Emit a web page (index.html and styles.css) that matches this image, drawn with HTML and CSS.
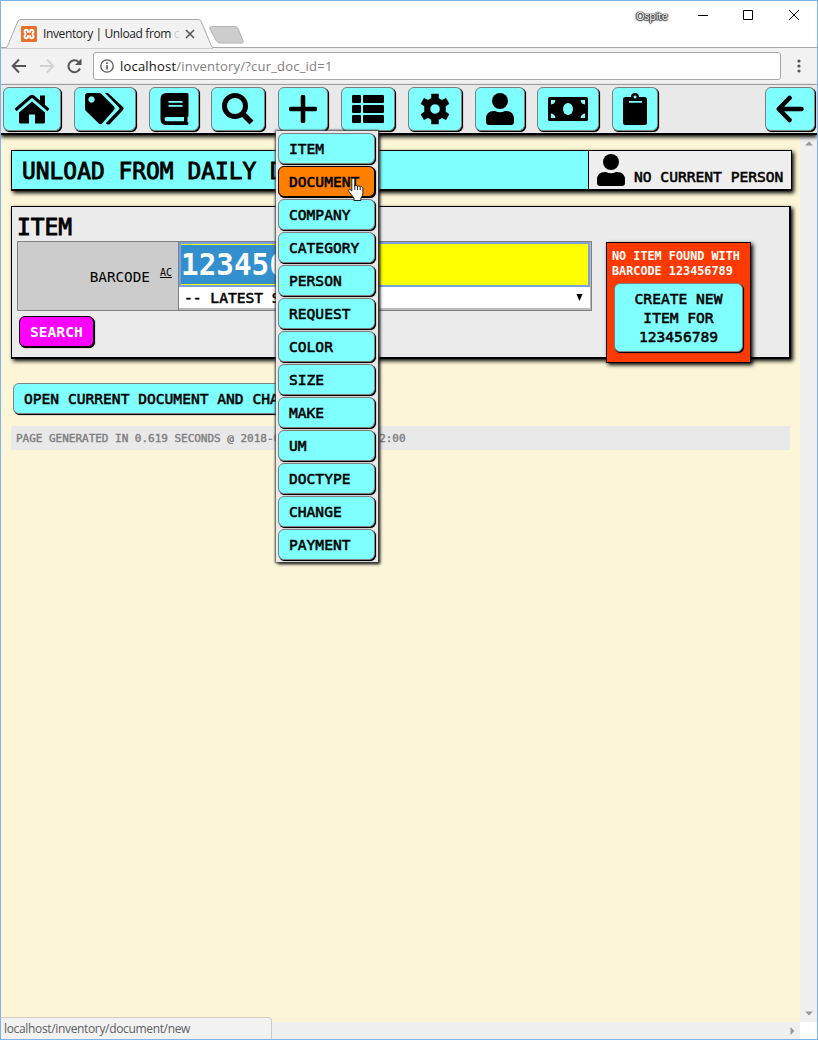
FILE: index.html
```
<!DOCTYPE html>
<html lang="en">
<head>
<meta charset="utf-8">
<title>Inventory</title>
<link rel="stylesheet" href="styles.css">
</head>
<body>
<div class="window">
  <header class="titlebar">
    <div class="tab">
      <svg class="tab-shape" width="212" height="30" viewBox="0 0 212 30"><path d="M-1 28.500H5Q6 28.500 7 26L17 2Q18 .5 20 .5H197Q199 .5 200 2L210 26Q211 28.500 212 28.500V30H-1z" fill="#f2f2f2" stroke="#a9a9a9"/></svg>
      <svg class="favicon" width="16" height="16" viewBox="0 0 16 16"><rect width="16" height="16" rx="1.500" fill="#e8702a"/><path d="M5.300 3.800a1.700 1.700 0 0 0-1.200 3q1 1.200 0 2.400a1.700 1.700 0 0 0 1.200 3q1.700 0 1.700-2h2q0 2 1.700 2a1.700 1.700 0 0 0 1.200-3q-1-1.200 0-2.400a1.700 1.700 0 0 0-1.200-3q-1.700 0-1.700 2H7q0-2-1.700-2z" fill="none" stroke="#fff" stroke-width="1.900"/></svg>
      <span class="tab-title">Inventory | Unload from <i>c</i></span>
      <svg class="tab-close" width="10" height="10" viewBox="0 0 10 10"><path d="M1 1l8 8M9 1L1 9" stroke="#555" stroke-width="1.600"/></svg>
    </div>
    <svg class="new-tab" width="36" height="18" viewBox="0 0 36 18"><path d="M2.500.5H26Q28 .5 29 2.500L34 14.500Q35 17 33 17H11Q8.500 17 7.500 15L1 3Q0 .5 2.500.5z" fill="#cdcdcd" stroke="#b5b5b5"/></svg>
    <span class="profile">Ospite</span>
    <svg class="win-buttons" width="106" height="12" viewBox="0 0 106 12" fill="none" stroke="#000"><path d="M1 5.500h10M46.500.5h9v9h-9zM92 0l10 10M102 0L92 10"/></svg>
  </header>
  <div class="toolbar">
    <svg class="history" width="76" height="18" viewBox="0 0 76 18" fill="none" stroke-width="2"><path d="M15 9H2M8 2.500L1.700 9 8 15.500" stroke="#555"/><path d="M29 9h13M36 2.500L42.300 9 36 15.500" stroke="#d2d2d2"/><path d="M69 11.500A6 6 0 1 1 67.500 4.800" stroke="#555"/><path d="M70.500 1.500v6.500H64z" fill="#555" stroke="none"/></svg>
    <div class="address">
      <svg width="14" height="14" viewBox="0 0 14 14"><circle cx="7" cy="7" r="6.200" fill="none" stroke="#555" stroke-width="1.300"/><path d="M6.200 6h1.600v4.500H6.200zM6.200 3.300h1.600v1.600H6.200z" fill="#555"/></svg>
      <span class="url"><b>localhost</b>/inventory/?cur_doc_id=1</span>
    </div>
    <svg class="kebab" width="4" height="14" viewBox="0 0 4 14" fill="#555"><circle cx="2" cy="2" r="1.600"/><circle cx="2" cy="7" r="1.600"/><circle cx="2" cy="12" r="1.600"/></svg>
  </div>

  <nav class="nav">
    <a class="btn w59"><svg width="36" height="30" viewBox="0 0 36 30"><path d="M18 7.500L31 18.500V28Q31 29.500 29.500 29.500H21V20.500H15V29.500H6.500Q5 29.500 5 28V18.500z"/><path d="M1.500 16L16.500 3Q18 1.800 19.500 3L34.500 16" fill="none" stroke="#000" stroke-width="3"/><path d="M26 1.500h5v12l-5-4z"/></svg></a>
    <a class="btn w63"><svg width="42" height="34" viewBox="0 0 42 34"><path d="M4 1h11q1.500 0 2.500 1l12.500 12.500q1.700 1.700 0 3.500L18 31.500q-1.500 1.500-3.200 0L2 19Q1 18 1 16.500V4Q1 1 4 1zM7.500 4.300a3.200 3.200 0 1 0 .1 0z" fill-rule="evenodd"/><path d="M21 1h3L39 15q1.500 1.500 0 3L26 32q-1.500 1-3.500 0l-.5-1L35 17.500q1-1 0-2z"/></svg></a>
    <a class="btn w50"><svg width="29" height="32" viewBox="0 0 29 32"><path fill-rule="evenodd" d="M6.500 0H27q1.500 0 1.500 1.500v21q0 1-1 1.500v5q1 .3 1 1.500T27 32H6.500Q.5 32 .5 26V6Q.5 0 6.500 0zM6.500 24q-2 0-2 2t2 2.200H24V24zM8.500 8v1.700h14V8zm0 4v1.700h14V12z"/></svg></a>
    <a class="btn w55"><svg width="34" height="34" viewBox="0 0 34 34" fill="none" stroke="#000"><circle cx="14" cy="14" r="10.500" stroke-width="5"/><path d="M21 21l9.500 9.500" stroke-width="5.500"/></svg></a>
    <a class="btn w51"><svg width="28" height="28" viewBox="0 0 28 28"><path d="M14 2v24M2 14h24" stroke="#000" stroke-width="4.600" stroke-linecap="round"/></svg></a>
    <a class="btn w55"><svg width="32" height="28" viewBox="0 0 32 28"><rect width="9" height="8" rx="1.300"/><rect y="10" width="9" height="8" rx="1.300"/><rect y="20" width="9" height="8" rx="1.300"/><rect x="11" width="21" height="8" rx="1.300"/><rect x="11" y="10" width="21" height="8" rx="1.300"/><rect x="11" y="20" width="21" height="8" rx="1.300"/></svg></a>
    <a class="btn w55"><svg width="32" height="32" viewBox="0 0 32 32"><path fill-rule="evenodd" d="M12.500 1h7v4.300l3.500 2 4-2 3 5.400-3.500 2.500v5.600l3.500 2.500-3 5.400-4-2-3.500 2V31h-7v-4.300l-3.500-2-4 2-3-5.400 3.500-2.500v-5.600L2 10.700l3-5.400 4 2 3.500-2zM16 11a5 5 0 1 0 .1 0z" stroke="#000" stroke-width=".5" stroke-linejoin="round"/></svg></a>
    <a class="btn w50"><svg width="28" height="32" viewBox="0 0 28 32"><circle cx="14" cy="8" r="8"/><path d="M0 29v-3Q0 18 8 18h1q5 2.500 10 0h1q8 0 8 8v3q0 3-3 3H3q-3 0-3-3z"/></svg></a>
    <a class="btn w63"><svg width="40" height="24" viewBox="0 0 40 24"><rect width="40" height="24" rx="1.500"/><g fill="#80ffff"><ellipse cx="20" cy="12" rx="5" ry="6"/><path d="M3 3h4.500Q7 7 3 7.500zM37 3h-4.500Q33 7 37 7.500zM3 21h4.500Q7 17 3 16.500zM37 21h-4.500Q33 17 37 16.500z"/></g></svg></a>
    <a class="btn w47"><svg width="24" height="32" viewBox="0 0 24 32"><path fill-rule="evenodd" d="M2.500 4H8a4 4 0 0 1 8 0h5.500Q24 4 24 6.500v23q0 2.500-2.500 2.500h-19Q0 32 0 29.500v-23Q0 4 2.500 4zM12 2.500a1.500 1.500 0 1 0 .1 0zM6 8v1.800h13V8z"/></svg></a>
    <a class="btn w51 back"><svg width="28" height="28" viewBox="0 0 28 28"><path d="M25.500 14H4M13.500 3L2.800 14l10.700 11" fill="none" stroke="#000" stroke-width="4.600" stroke-linecap="round" stroke-linejoin="round"/></svg></a>
    <div class="menu">
      <a class="btn">ITEM</a><a class="btn hot">DOCUMENT</a><a class="btn">COMPANY</a><a class="btn">CATEGORY</a><a class="btn">PERSON</a><a class="btn">REQUEST</a><a class="btn">COLOR</a><a class="btn">SIZE</a><a class="btn">MAKE</a><a class="btn">UM</a><a class="btn">DOCTYPE</a><a class="btn">CHANGE</a><a class="btn">PAYMENT</a>
    </div>
  </nav>

  <div class="viewport">
    <main class="page">
      <div class="heading">
        <h1>UNLOAD FROM DAILY DOC</h1>
        <div class="person"><svg width="28" height="32" viewBox="0 0 28 32"><circle cx="14" cy="8" r="8"/><path d="M0 29v-3Q0 18 8 18h1q5 2.500 10 0h1q8 0 8 8v3q0 3-3 3H3q-3 0-3-3z"/></svg><span>NO CURRENT PERSON</span></div>
      </div>
      <section class="panel">
        <h2>ITEM</h2>
        <div class="form">
          <div class="label">BARCODE <u>AC</u></div>
          <div class="fields">
            <div class="barcode"><span>123456789</span></div>
            <div class="select"><span>-- LATEST SEARCHES --</span><svg width="7" height="7" viewBox="0 0 7 7"><path d="M.5 0h6L3.500 7z"/></svg></div>
          </div>
        </div>
        <a class="btn search">SEARCH</a>
        <div class="alert">
          <p>NO ITEM FOUND WITH BARCODE 123456789</p>
          <a class="btn create">CREATE NEW<br>ITEM FOR<br>123456789</a>
        </div>
      </section>
      <a class="btn open">OPEN CURRENT DOCUMENT AND CHANGE</a>
      <footer class="generated">PAGE GENERATED IN 0.619 SECONDS @ 2018-04-12T12:00:00+02:00</footer>
    </main>
    <div class="vscroll">
      <svg width="8" height="5" viewBox="0 0 8 5"><path d="M0 4.500L4 .5l4 4z"/></svg>
      <svg width="8" height="5" viewBox="0 0 8 5"><path d="M0 .5h8l-4 4z"/></svg>
    </div>
    <div class="hscroll"><svg width="5" height="8" viewBox="0 0 5 8"><path d="M.5 0v8l4-4z"/></svg></div>
    <div class="corner"></div>
  </div>
  <div class="status">localhost/inventory/document/new</div>
  <svg class="cursor" width="20" height="25" viewBox="0 0 20 25"><path d="M5.500 1.500Q7 .5 7.800 2.500V9q1-1.500 2.700.2 1.500-1 2.700.6 1.700-.8 2.700 1V16q0 3-2 5v2.500H7V21l-4.500-5.500q-2-3 .3-3.300L4.800 14V2.500z" transform="translate(1 0)" fill="#fff" stroke="#222"/><path d="M8.800 8v5M11.500 9v4M14.200 10v3" stroke="#222" fill="none"/></svg>
</div>
</body>
</html>
```
FILE: styles.css
```
* { box-sizing: border-box; }
body { margin: 0; font-family: "DejaVu Sans Mono", monospace; color: #000; }
svg { display: block; flex: none; }
.window { position: relative; width: 818px; height: 1040px; border: 1px solid #7eb4ea; background: #fff; display: flex; flex-direction: column; overflow: hidden; }

.titlebar { height: 47px; flex: none; display: flex; position: relative; border-bottom: 1px solid #a9a9a9; font-family: "Open Sans", sans-serif; }
.tab { position: relative; width: 212px; height: 30px; margin: 18px 0 0 0; display: flex; align-items: center; padding: 0 0 1px 20px; }
.tab-shape { position: absolute; left: 0; top: 0; }
.favicon, .tab-title, .tab-close { position: relative; }
.tab-title { margin-left: 6px; width: 136px; font-size: 12px; white-space: nowrap; letter-spacing: -.38px; color: #222; }
.tab-title i { font-style: normal; color: #ccc; }
.tab-close { margin-left: 6px; }
.new-tab { margin: 25px 0 0 -4px; }
.profile { margin: 7px 0 0 391px; width: 38px; font-size: 11px; line-height: 16px; letter-spacing: -.3px; color: #fff; text-shadow: 0 0 1px #222, 0 0 2px #222, 0 1px 1px #444, 1px 0 1px #444, -1px 0 1px #444; }
.win-buttons { margin: 9px 0 0 23px; }

.toolbar { height: 37px; flex: none; display: flex; align-items: center; background: #f2f2f2; border-bottom: 1px solid #b0b0b0; padding: 0 16px 0 10px; }
.history { width: 76px; }
.address { margin-left: 6px; width: 689px; height: 28px; border: 1px solid #a9a9a9; border-radius: 3px; background: #fff; display: flex; align-items: center; gap: 6px; padding-left: 6px; }
.url { font: 13px/18px "Open Sans", sans-serif; color: #808080; letter-spacing: .2px; }
.url b { font-weight: 400; color: #111; }
.kebab { margin-left: 16px; }

.nav { position: relative; z-index: 2; height: 50px; flex: none; display: flex; gap: 13px; padding: 2px 2px 0 2px; background: #e9e9e9; border-bottom: 2px solid #000; box-shadow: 0 2px 4px #000; }
.btn { display: flex; align-items: center; background: #80ffff; border: 1px solid #808080; border-radius: 6px; box-shadow: 1px 1px 0 #000, 1px 1px 1px #000; font-size: 14.6px; -webkit-text-stroke: .55px currentColor; white-space: nowrap; }
.nav > .btn { height: 44px; justify-content: center; flex: none; }
.w47 { width: 46px; } .w50 { width: 50px; margin-right: -1px; } .w51 { width: 50px; } .w55 { width: 54px; } .w59 { width: 58px; } .w63 { width: 62px; }
.nav > .back { margin: 0 0 0 auto; }
.menu { position: absolute; left: 275px; top: 46px; width: 102px; height: 431px; padding: 2px 2px 0; display: flex; flex-direction: column; gap: 2px; background: #e9e9e9; box-shadow: 0 0 2px 1px #444, 2px 2px 3px #000; }
.menu .btn { width: 97px; height: 31px; padding-left: 10px; }
.menu .hot { background: #ff8000; border-color: #000; }

.viewport { flex: 1; min-height: 0; display: grid; grid-template-columns: 1fr 17px; grid-template-rows: 1fr 17px; }
.page { background: #fdf5d7; padding: 15px 0 0 10px; }
.heading { width: 781px; height: 41px; display: flex; background: #80ffff; border: 1px solid #000; border-bottom-width: 2px; box-shadow: 2px 2px 4px #000; }
h1, h2, p { margin: 0; }
h1, h2 { font-weight: 400; font-size: 22.900px; -webkit-text-stroke: .9px #000; }
h1 { width: 576px; padding-left: 10px; line-height: 40px; white-space: nowrap; }
.person { flex: 1; display: flex; align-items: flex-start; border-left: 1px solid #000; background: #eee; padding: 3px 0 0 8px; font-size: 14.600px; -webkit-text-stroke: .55px #000; }
.person span { margin: 14px 0 0 9px; line-height: 18px; white-space: nowrap; }
.panel { position: relative; margin-top: 15px; width: 780px; height: 153px; background: #ebebeb; border: 1px solid #000; border-right-width: 2px; border-bottom-width: 2px; box-shadow: 2px 2px 4px #000; padding: 6px 0 0 5px; }
h2 { line-height: 28px; height: 28px; }
.form { width: 575px; height: 70px; border: 1px solid #808080; display: flex; }
.label { width: 161px; background: #ccc; border-right: 1px solid #808080; display: flex; align-items: center; justify-content: flex-end; gap: 10px; font-size: 14.300px; padding: 2px 6px 0 0; }
.label u { font-size: 10px; margin-top: -9px; }
.fields { flex: 1; display: flex; flex-direction: column; border-right: 1px solid #bbb; border-bottom: 2px solid #bbb; }
.barcode { height: 45px; border: 2px solid #7b9fdf; background: #ff0; display: flex; align-items: center; }
.barcode span { background: #338fce; color: #fff; font-size: 29.300px; height: 39px; line-height: 41px; font-weight: 700; }
.select { flex: 1; background: #fff; display: flex; align-items: center; justify-content: space-between; padding: 0 7px 1px 5px; font-size: 14.600px; -webkit-text-stroke: .55px #000; }
.search { margin: 5px 0 0 2px; width: 75px; height: 31px; padding-left: 10px; background: #f0f; border-color: #000; color: #fff; font-weight: 700; -webkit-text-stroke: 0; }
.alert { position: absolute; left: 594px; top: 35px; width: 145px; height: 121px; background: #ff3a00; border: 1px solid #000; box-shadow: 2px 2px 4px #000; padding: 6px 6px 0 5px; }
.alert p { color: #fff; font-weight: 700; font-size: 11.800px; line-height: 15px; }
.create { margin: 4px 0 0 2px; width: 129px; height: 69px; justify-content: center; text-align: center; line-height: 19px; }
.open { width: 310px; height: 31px; margin: 24px 0 0 2px; padding-left: 10px; }
.generated { width: 779px; height: 24px; margin-top: 12px; padding-left: 5px; background: #e9e9e9; color: #808080; font-size: 11px; letter-spacing: -.02px; -webkit-text-stroke: .4px #808080; line-height: 25px; white-space: nowrap; }
.vscroll { background: #f0f0f0; display: flex; flex-direction: column; justify-content: space-between; align-items: center; padding: 6px 0; }
.vscroll svg, .hscroll svg { fill: #999; }
.hscroll { background: #f0f0f0; display: flex; align-items: center; justify-content: flex-end; padding-right: 5px; }
.status { position: absolute; left: 0; bottom: 0; width: 271px; height: 22px; background: #f2f2f2; border-top: 1px solid #d0cdbf; border-right: 1px solid #ccc; border-radius: 0 4px 0 0; padding-left: 3px; font: 12px/21px "Open Sans", sans-serif; letter-spacing: -.34px; color: #606060; }
.cursor { position: absolute; z-index: 3; left: 345px; top: 176px; }
```
